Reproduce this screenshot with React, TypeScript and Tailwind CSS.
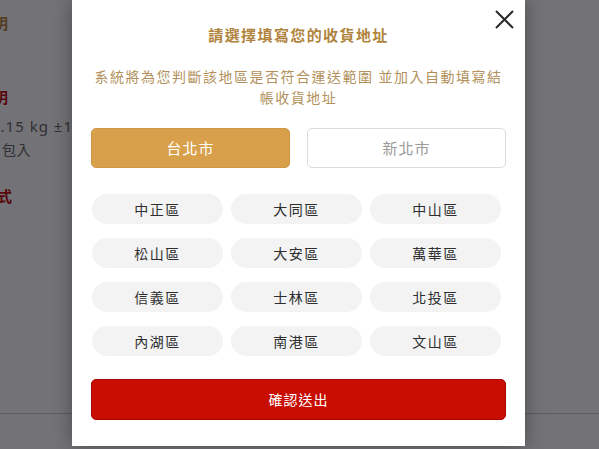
import React from "react";

const districts = [
  "中正區", "大同區", "中山區",
  "松山區", "大安區", "萬華區",
  "信義區", "士林區", "北投區",
  "內湖區", "南港區", "文山區",
];

export default function App() {
  return (
    <div
      className="relative w-[599px] h-[449px] overflow-hidden bg-white"
      style={{ fontFamily: '"Noto Sans", "Noto Sans CJK TC", sans-serif' }}
    >
      {/* background page */}
      <div className="flex flex-col whitespace-nowrap">
        <div className="mt-[13px] ml-[-22px] leading-[20px] text-[15px] font-bold text-[#b8873c]">說明</div>
        <div className="mt-[54px] ml-[-22px] leading-[20px] text-[15px] font-bold text-[#c21414]">說明</div>
        <div className="mt-[9px] ml-[-9px] leading-[20px] text-[15px] tracking-[1px] text-[#6a6a6a]">1.15 kg ±10%</div>
        <div className="mt-[4px] ml-[2px] leading-[20px] text-[14px] tracking-[0.5px] text-[#6a6a6a]">包入</div>
        <div className="mt-[26px] ml-[-18px] leading-[20px] text-[15px] font-bold text-[#c21414]">方式</div>
        <div className="mt-[207px] border-t border-[#d0d0d0]" />
      </div>

      {/* overlay */}
      <div className="absolute inset-0 bg-[rgba(0,0,8,0.55)]" />

      {/* modal */}
      <div className="absolute left-[72px] top-0 w-[453px] h-[446px] bg-white shadow-[0_0_18px_rgba(0,0,0,0.35)] flex flex-col px-[19px]">
        <button className="absolute top-[9px] right-[11px] w-[20px] h-[20px] flex items-center justify-center">
          <svg width="19" height="19" viewBox="0 0 19 19">
            <path d="M1 1 L18 18 M18 1 L1 18" stroke="#2a2a2a" strokeWidth="2" strokeLinecap="butt" fill="none" />
          </svg>
        </button>

        <h2 className="mt-[25px] text-center leading-[20px] text-[15px] font-bold tracking-[1.4px] text-[#b0843d]">
          請選擇填寫您的收貨地址
        </h2>

        <p className="mt-[21px] px-0 text-center leading-[21px] text-[14px] tracking-[1.5px] text-[#b2915c]">
          系統將為您判斷該地區是否符合運送範圍 並加入自動填寫結帳收貨地址
        </p>

        <div className="mt-[20px] flex gap-[17px]">
          <button className="flex-1 h-[40px] rounded-[5px] bg-[#d9a04b] border border-[#cf9645] text-white text-[15px] tracking-[1px]">
            台北市
          </button>
          <button className="flex-1 h-[40px] rounded-[5px] bg-white border border-[#dcdcdc] text-[#9a9a9a] text-[15px] tracking-[1px]">
            新北市
          </button>
        </div>

        <div className="mt-[26px] grid grid-cols-3 gap-x-2 gap-y-[14px] pl-px pr-[5px]">
          {districts.map((d) => (
            <div
              key={d}
              className="h-[30px] rounded-full bg-[#f3f3f4] flex items-center justify-center text-[14px] tracking-[1.5px] text-[#2e2e2e]"
            >
              {d}
            </div>
          ))}
        </div>

        <button className="mt-[23px] h-[41px] w-full rounded-[5px] bg-[#c80d02] border border-[#a80a02] text-white text-[14px] font-normal tracking-[1px]">
          確認送出
        </button>
      </div>
    </div>
  );
}
